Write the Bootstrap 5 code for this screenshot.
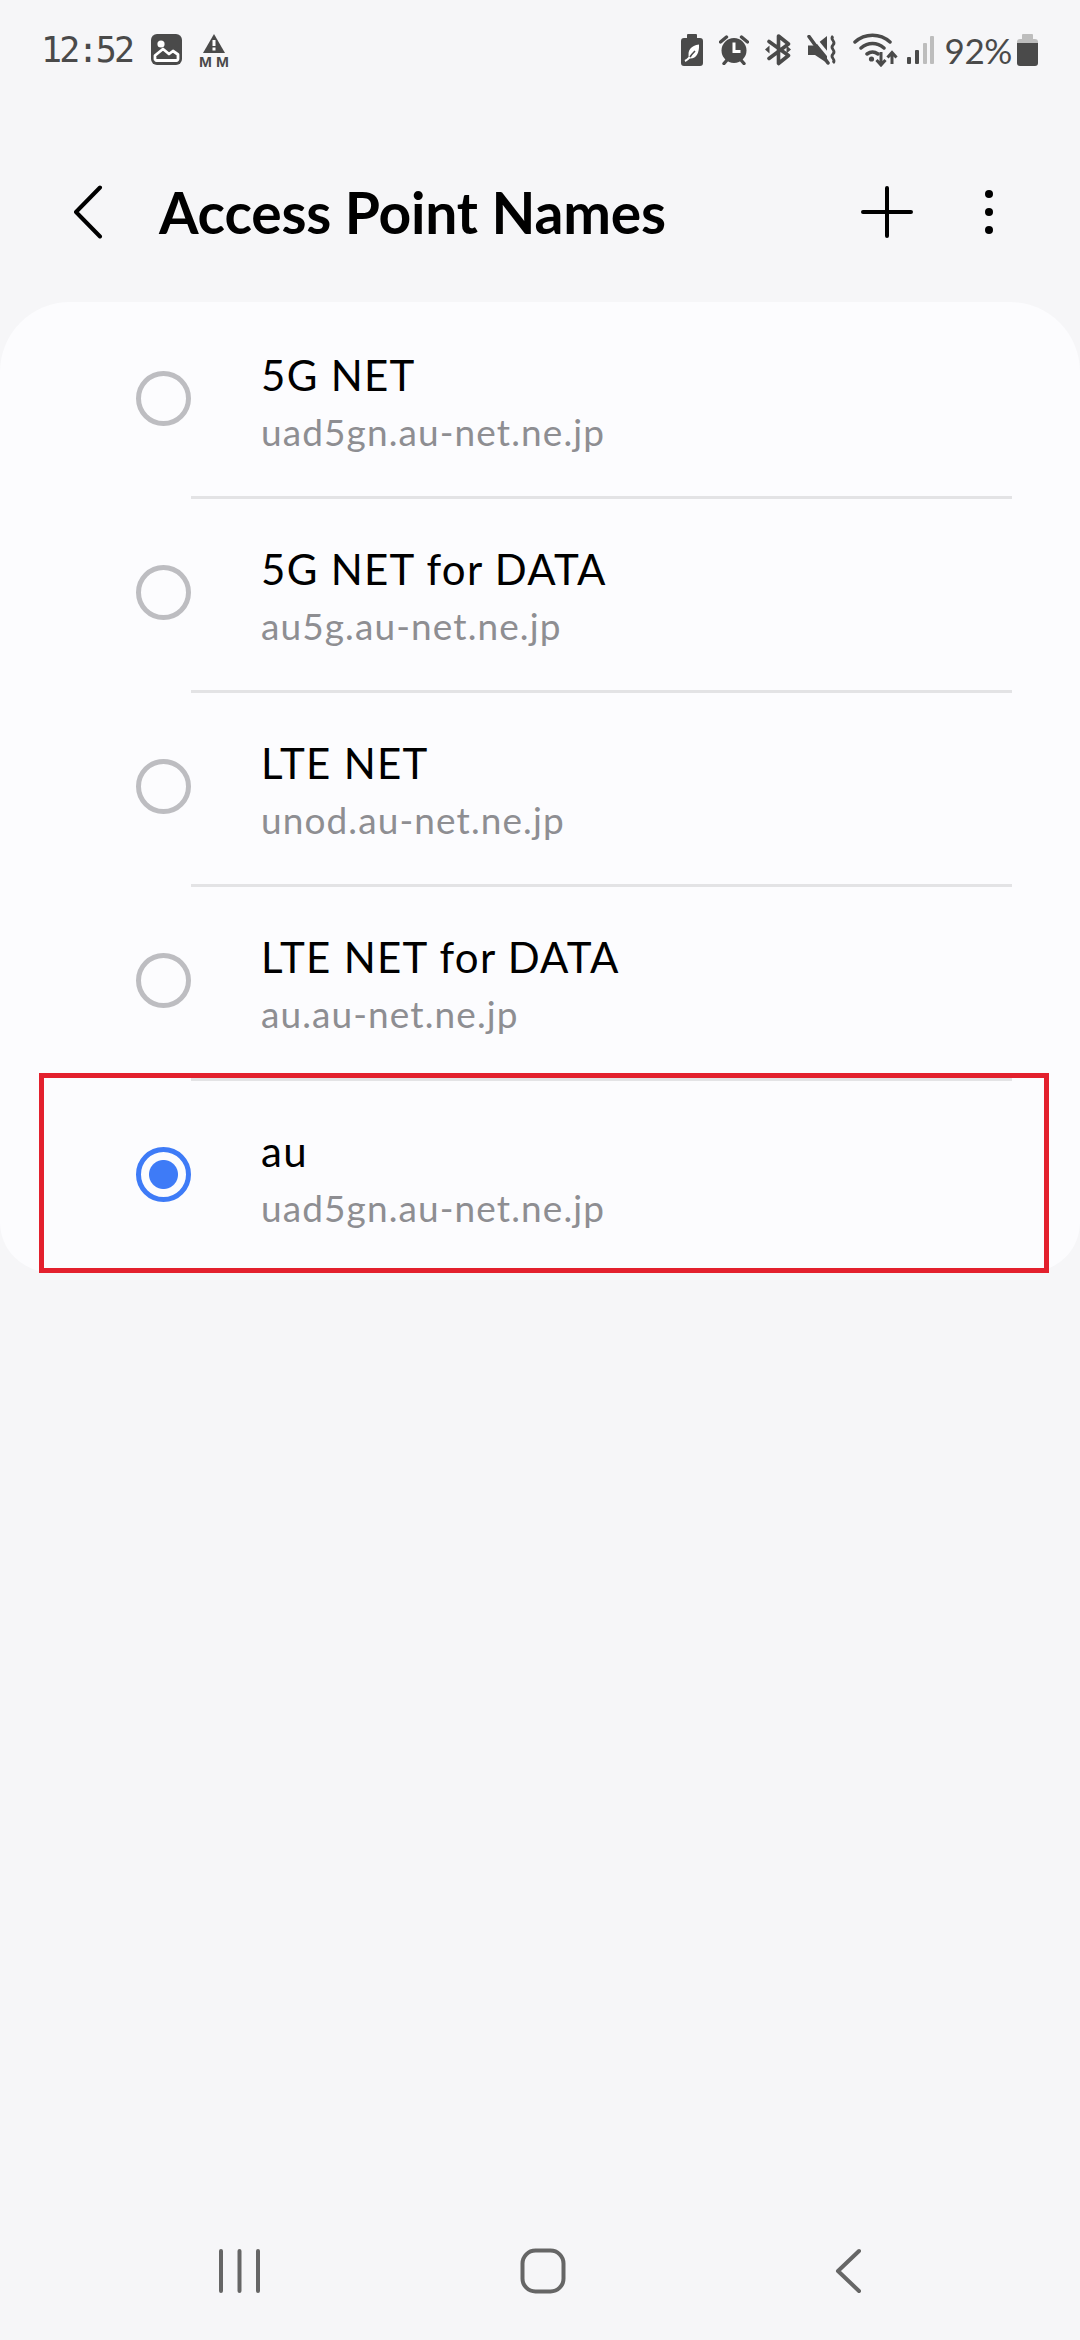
<!doctype html>
<html lang="en">
<head>
<meta charset="utf-8">
<title>Access Point Names</title>
<link href="https://cdn.jsdelivr.net/npm/bootstrap@5.3.0/dist/css/bootstrap.min.css" rel="stylesheet">
<style>
html,body{margin:0;height:2340px;background:#f6f6f8;font-family:"Lato","Liberation Sans",sans-serif;overflow:hidden}
.screen{height:2340px;background:#f6f6f8}
.sbar{height:100px;padding:0 42px 0 41px;color:#4a4a4a}
.stime{font-family:"DejaVu Sans Mono",monospace;font-size:35px;letter-spacing:-2.8px;line-height:1;width:110px}
.spct{font-size:35px;line-height:1;letter-spacing:-.4px;margin:0 5px 0 11px}
.mmicon{margin:2px 0 0 17px;width:30px}
.mmtext{font:700 15.500px/12px "Liberation Sans",sans-serif;letter-spacing:4px;margin-top:3px;white-space:nowrap;height:12px}
.tbar{height:202px;padding-top:22px}
.tbar-title{font-size:57px;font-weight:700;color:#000;letter-spacing:-.2px;line-height:1;margin:0 0 0 56px}
.screen .apn-card{background:#fcfcfe;border-radius:70px 70px 50px 50px;--bs-list-group-bg:transparent;--bs-list-group-border-width:0;height:970px}
.apn-row{height:192px;padding:0 0 0 136px;background:transparent;position:relative}
.apn-sep{height:3px;background:#e3e3e5;margin:2px 68px -3px 191px;position:relative;z-index:1}
.apn-radio.form-check-input{width:55px;height:55px;margin:0 70px 0 0;border:5px solid #bdbdc1;background-color:transparent;flex:none}
.apn-radio.form-check-input:checked{border-color:#3e7bf7;background-color:transparent;background-image:radial-gradient(circle,#3e7bf7 0 14px,transparent 15px)}
.apn-txt{padding-top:6px}
.apn-name{font-size:42px;line-height:52px;color:#000;letter-spacing:1.3px}
.apn-host{font-size:37px;line-height:44px;color:#8e8e92;margin-top:9px;letter-spacing:1.1px}
.markbox{position:absolute;left:39px;right:31px;top:-5px;bottom:-3px;border:5px solid #e3202d;pointer-events:none;z-index:2}
.navbar-sys{height:139px;padding-bottom:0}
.sp{flex:1 1 auto}
svg{display:block;flex:none}
</style>
</head>
<body>
<div class="screen d-flex flex-column">
  <div class="sbar d-flex align-items-center">
    <span class="stime">12:52</span>
    <svg width="31" height="32" viewBox="0 0 31 32"><rect width="31" height="31" rx="6" fill="#4a4a4a"/><circle cx="10" cy="10" r="3.6" fill="#fff"/><path d="M4 25.500V21.500l8-6.500 6 5 4-3 5 3.500v4.500a1.500 1.500 0 0 1-1.500 1.500H5.500A1.500 1.500 0 0 1 4 25z" fill="#4a4a4a" stroke="#fff" stroke-width="2.800" stroke-linejoin="round"/></svg>
    <div class="mmicon d-flex flex-column align-items-start">
      <svg class="align-self-center" width="22" height="19" viewBox="0 0 22 19"><path d="M11 0 22 19H0z" fill="#4a4a4a"/><rect x="9.500" y="6" width="3" height="6" fill="#fff"/><rect x="9.500" y="13.500" width="3" height="3" fill="#fff"/></svg>
      <div class="mmtext">MM</div>
    </div>
    <span class="sp"></span>
    <svg width="22" height="32" viewBox="0 0 22 32"><path d="M7 0h8a1 1 0 0 1 1 1v3h3a3 3 0 0 1 3 3v22a3 3 0 0 1-3 3H3a3 3 0 0 1-3-3V7a3 3 0 0 1 3-3h3V1a1 1 0 0 1 1-1z" fill="#4a4a4a"/><path d="M8 24.500C6 16 10 11.500 18 10.500 18.500 19 15 25.500 8 24.500z" fill="#fff"/><path d="M4 27c2-1 3-2 4-3M8 24c2-3 4-5 6-7" fill="none" stroke="#fff" stroke-width="2"/><path d="M9 23c1.500-2.500 3-4 5-6" fill="none" stroke="#4a4a4a" stroke-width="1.600"/></svg>
    <svg class="ms-3" width="30" height="30" viewBox="0 0 30 30"><circle cx="15" cy="15.500" r="12.500" fill="#4a4a4a"/><path d="M15 7.500V16.500h6.500" fill="none" stroke="#fff" stroke-width="3"/><path d="M1.500 7l6-5M28.500 7l-6-5M5 28.500l3.500-4M25 28.500l-3.500-4" stroke="#4a4a4a" stroke-width="3.400" stroke-linecap="round"/></svg>
    <svg class="ms-3" width="26" height="32" viewBox="0 0 26 32"><path d="M4 7.500 23.500 21.500 13.500 29.500V2L23.500 10 4 24.500" fill="none" stroke="#4a4a4a" stroke-width="3.600" stroke-linejoin="round" stroke-linecap="round"/><path d="M0 15.500 4.500 11.500V19.500zM26 15.500 21.500 11.500V19.500z" fill="#4a4a4a"/></svg>
    <svg class="ms-3" width="30" height="30" viewBox="0 0 30 30"><path d="M1 10.500h7L20 1v27L8 20H1z" fill="#4a4a4a"/><path d="M4-1 27 27" stroke="#f6f6f8" stroke-width="3.500"/><path d="M2 1.500 21 28" stroke="#4a4a4a" stroke-width="3.500" stroke-linecap="round"/><path d="M26 1c-4 4 4 5 0 9s4 5 0 9 4 5 0 9" fill="none" stroke="#4a4a4a" stroke-width="2.800"/></svg>
    <svg class="ms-3" width="46" height="34" viewBox="0 0 46 34"><path d="M2 9c10-9 25-9 35 0M8 15c7-6 16-6 23 0M14 21c4-3 7-3 11 0" fill="none" stroke="#4a4a4a" stroke-width="3.500" stroke-linecap="round"/><circle cx="18.500" cy="26" r="2.600" fill="#4a4a4a"/><path d="M28 19v13M23.500 27l4.500 5 4.500-5M39 31V20M34.500 24.500l4.500-5 4.500 5" fill="none" stroke="#4a4a4a" stroke-width="3"/></svg>
    <svg class="ms-2" width="27" height="30" viewBox="0 0 27 30"><rect y="22" width="4" height="7" rx="1" fill="#4a4a4a"/><rect x="8" y="15" width="4" height="14" rx="1" fill="#4a4a4a"/><rect x="16" y="8" width="4" height="21" rx="1" fill="#bdbdbd"/><rect x="23" y="1" width="4" height="28" rx="1" fill="#bdbdbd"/></svg>
    <span class="spct">92%</span>
    <svg width="21" height="32" viewBox="0 0 21 32"><path d="M6 0h9a1 1 0 0 1 1 1v4H5V1a1 1 0 0 1 1-1z" fill="#bdbdbd"/><path d="M0 8a3 3 0 0 1 3-3h15a3 3 0 0 1 3 3v2H0z" fill="#bdbdbd"/><path d="M0 9h21v20a3 3 0 0 1-3 3H3a3 3 0 0 1-3-3z" fill="#4a4a4a"/></svg>
  </div>
  <nav class="tbar d-flex align-items-center">
    <svg style="margin-left:72px" width="31" height="54" viewBox="0 0 31 54"><path d="M28 2.500 4 27l24 24.500" fill="none" stroke="#000" stroke-width="4" stroke-linecap="round" stroke-linejoin="round"/></svg>
    <h1 class="tbar-title">Access Point Names</h1>
    <span class="sp"></span>
    <svg width="52" height="52" viewBox="0 0 52 52"><path d="M26 2v48M2 26h48" stroke="#000" stroke-width="4" stroke-linecap="round"/></svg>
    <svg style="margin:0 87px 0 72px" width="8" height="44" viewBox="0 0 8 44"><circle cx="4" cy="4" r="4"/><circle cx="4" cy="22" r="4"/><circle cx="4" cy="40" r="4"/></svg>
  </nav>
  <div class="apn-card list-group list-group-flush">
    <label class="list-group-item apn-row d-flex align-items-center"><input class="form-check-input apn-radio" type="radio" name="apn"><span class="apn-txt"><span class="d-block apn-name">5G NET</span><span class="d-block apn-host">uad5gn.au-net.ne.jp</span></span></label>
    <div class="apn-sep"></div>
    <label class="list-group-item apn-row d-flex align-items-center"><input class="form-check-input apn-radio" type="radio" name="apn"><span class="apn-txt"><span class="d-block apn-name">5G NET for DATA</span><span class="d-block apn-host">au5g.au-net.ne.jp</span></span></label>
    <div class="apn-sep"></div>
    <label class="list-group-item apn-row d-flex align-items-center"><input class="form-check-input apn-radio" type="radio" name="apn"><span class="apn-txt"><span class="d-block apn-name">LTE NET</span><span class="d-block apn-host">unod.au-net.ne.jp</span></span></label>
    <div class="apn-sep"></div>
    <label class="list-group-item apn-row d-flex align-items-center"><input class="form-check-input apn-radio" type="radio" name="apn"><span class="apn-txt"><span class="d-block apn-name">LTE NET for DATA</span><span class="d-block apn-host">au.au-net.ne.jp</span></span></label>
    <div class="apn-sep"></div>
    <label class="list-group-item apn-row d-flex align-items-center"><input class="form-check-input apn-radio" type="radio" name="apn" checked><span class="apn-txt"><span class="d-block apn-name">au</span><span class="d-block apn-host">uad5gn.au-net.ne.jp</span></span><span class="markbox"></span></label>
  </div>
  <span class="sp"></span>
  <div class="navbar-sys d-flex align-items-center">
    <svg style="margin-left:218px" width="44" height="44" viewBox="0 0 44 44"><path d="M3 2v40M21.500 2v40M40 2v40" stroke="#666" stroke-width="4" stroke-linecap="round"/></svg>
    <svg style="margin-left:258px" width="46" height="46" viewBox="0 0 46 46"><rect x="2.500" y="2.500" width="41" height="41" rx="13" fill="none" stroke="#666" stroke-width="4"/></svg>
    <svg style="margin-left:268px" width="28" height="46" viewBox="0 0 28 46"><path d="M25 3 4 23l21 20" fill="none" stroke="#666" stroke-width="4" stroke-linecap="round" stroke-linejoin="round"/></svg>
  </div>
</div>
<script src="https://cdn.jsdelivr.net/npm/bootstrap@5.3.0/dist/js/bootstrap.bundle.min.js"></script>
</body>
</html>
